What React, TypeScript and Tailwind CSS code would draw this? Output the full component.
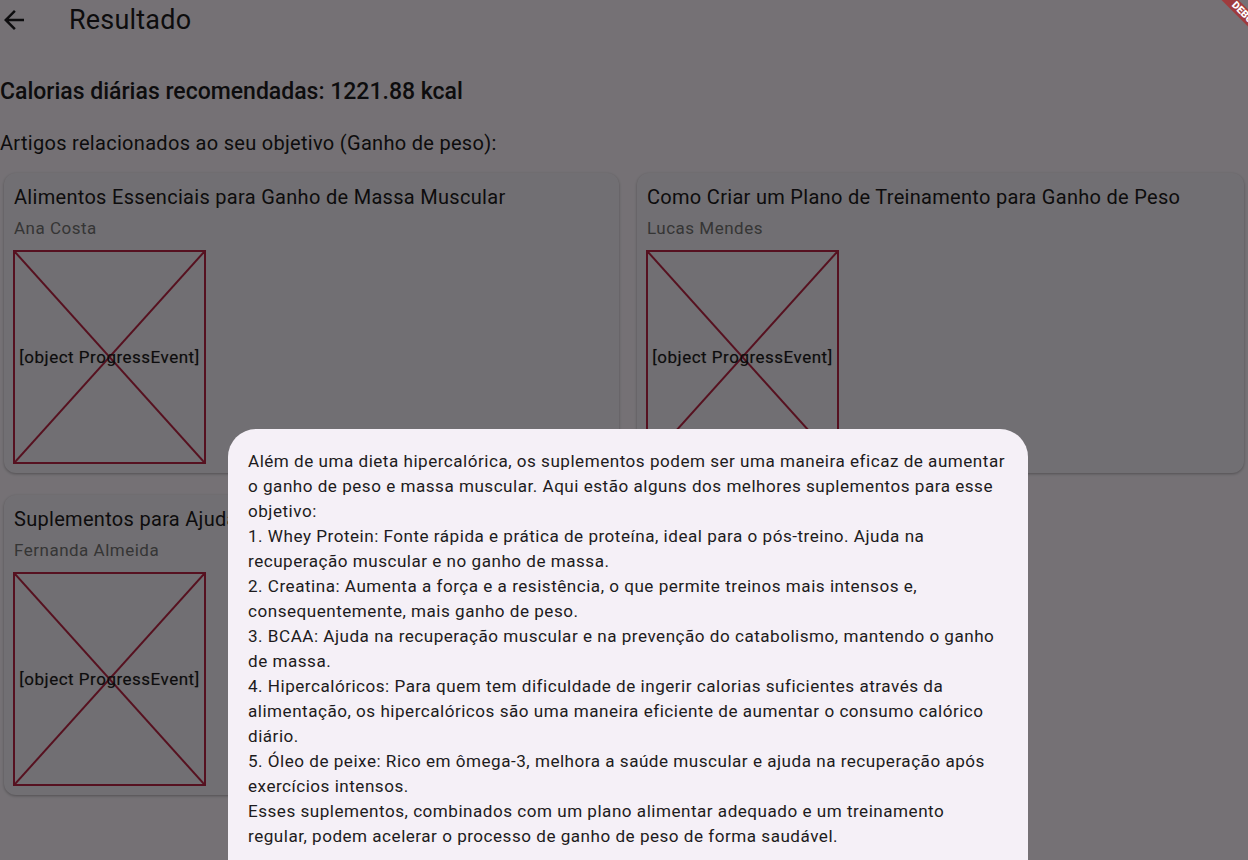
import React from "react";

// Result screen with a modal bottom sheet open over it
const articles = [
  { id: 1, title: "Alimentos Essenciais para Ganho de Massa Muscular", author: "Ana Costa" },
  { id: 2, title: "Como Criar um Plano de Treinamento para Ganho de Peso", author: "Lucas Mendes" },
  { id: 3, title: "Suplementos para Ajudar no Ganho de Peso", author: "Fernanda Almeida" },
];

const sheetText = `Além de uma dieta hipercalórica, os suplementos podem ser uma maneira eficaz de aumentar o ganho de peso e massa muscular. Aqui estão alguns dos melhores suplementos para esse objetivo:
1. Whey Protein: Fonte rápida e prática de proteína, ideal para o pós-treino. Ajuda na recuperação muscular e no ganho de massa.
2. Creatina: Aumenta a força e a resistência, o que permite treinos mais intensos e, consequentemente, mais ganho de peso.
3. BCAA: Ajuda na recuperação muscular e na prevenção do catabolismo, mantendo o ganho de massa.
4. Hipercalóricos: Para quem tem dificuldade de ingerir calorias suficientes através da alimentação, os hipercalóricos são uma maneira eficiente de aumentar o consumo calórico diário.
5. Óleo de peixe: Rico em ômega-3, melhora a saúde muscular e ajuda na recuperação após exercícios intensos.
Esses suplementos, combinados com um plano alimentar adequado e um treinamento regular, podem acelerar o processo de ganho de peso de forma saudável.`;

function BrokenImage() {
  return (
    <div className="relative w-[193px] h-[214px] border-2 border-[#bc2746] flex items-center justify-center">
      <svg className="absolute inset-0 w-full h-full" viewBox="0 0 189 210" preserveAspectRatio="none">
        <line x1="0" y1="0" x2="189" y2="210" stroke="#bc2746" strokeWidth="2" />
        <line x1="189" y1="0" x2="0" y2="210" stroke="#bc2746" strokeWidth="2" />
      </svg>
      <span className="relative text-[17px] leading-[20px] tracking-[0.5px] text-[#1d1b20] whitespace-nowrap [text-shadow:0_0_1px_rgba(0,0,0,0.3)]">
        [object ProgressEvent]
      </span>
    </div>
  );
}

export default function App() {
  return (
    <div className="relative w-[1248px] h-[860px] overflow-hidden bg-[#fef7ff] text-[#1d1b20] font-['Roboto',sans-serif]">
      {/* App bar */}
      <div className="flex items-center h-[40px]">
        <svg className="ml-[-1px] w-[30px] h-[30px]" viewBox="0 0 24 24" fill="#1d1b20">
          <path d="M20 11H7.83l5.59-5.59L12 4l-8 8 8 8 1.41-1.41L7.83 13H20v-2z" />
        </svg>
        <h1 className="ml-[40px] text-[27px] leading-[32px] tracking-[0.2px]">Resultado</h1>
      </div>

      <p className="mt-[39px] text-[23px] leading-[26px] font-medium">Calorias diárias recomendadas: 1221.88 kcal</p>
      <p className="mt-[26px] text-[20px] leading-[24px] tracking-[0.3px]">Artigos relacionados ao seu objetivo (Ganho de peso):</p>

      {/* Article cards */}
      <div className="mt-[18px] pl-[4px] grid grid-cols-[615px_607px] gap-x-[18px] gap-y-[22px]">
        {articles.map((a) => (
          <div key={a.id} className="h-[300px] rounded-[12px] bg-[#f7f2fa] shadow-[0_1px_3px_rgba(0,0,0,0.3)] pt-[12px] pl-[10px]">
            <h3 className="text-[20px] leading-[24px] tracking-[0.3px] whitespace-nowrap">{a.title}</h3>
            <p className="mt-[8px] text-[17px] leading-[22px] tracking-[0.5px] text-[#757575]">{a.author}</p>
            <div className="mt-[11px] ml-[-1px]">
              <BrokenImage />
            </div>
          </div>
        ))}
      </div>

      {/* Scrim */}
      <div className="absolute inset-0 bg-black/[0.54]" />

      {/* Bottom sheet */}
      <div className="absolute left-[228px] top-[429px] bottom-0 w-[800px] rounded-t-[28px] bg-[#f5f0f7] px-[20px] pt-[20px]">
        <p className="text-[17.1px] leading-[25px] tracking-[0.5px] text-[#1d1b20] whitespace-pre-line">{sheetText}</p>
      </div>

      {/* Debug banner */}
      <div className="absolute left-[1205px] top-[9px] w-[80px] h-[12px] rotate-45 bg-[#b71c1c]/[0.63] flex items-center justify-center">
        <span className="text-[10.2px] leading-[10px] font-black text-white">DEBUG</span>
      </div>
    </div>
  );
}
